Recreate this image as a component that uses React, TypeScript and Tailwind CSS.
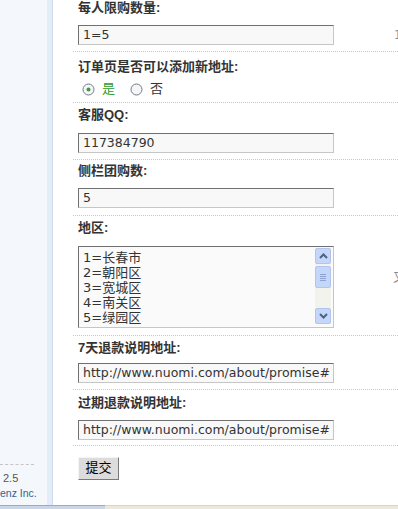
import React from 'react';

const labelFont = { fontFamily: '"Liberation Sans", "Noto Sans CJK SC", sans-serif' };
const textFont = { fontFamily: '"DejaVu Sans", "Noto Sans CJK SC", sans-serif' };
const smallFont = { fontFamily: '"Liberation Sans", Arial, sans-serif' };

function Label({ children }: { children: React.ReactNode }) {
  return (
    <div className="h-[16px] text-[13px] leading-[16px] font-bold text-[#333]" style={labelFont}>
      {children}
    </div>
  );
}

function TextBox({ value }: { value: string }) {
  return (
    <div
      className="h-[20px] w-[256px] shrink-0 overflow-hidden whitespace-nowrap border border-t-[#707070] border-l-[#707070] border-r-[#c6c6c6] border-b-[#c6c6c6] bg-[#f8f8f8] pl-[4px] text-[12.5px] leading-[18px] text-[#333]"
      style={textFont}
    >
      {value}
    </div>
  );
}

function Radio({ checked }: { checked?: boolean }) {
  return (
    <svg width="13" height="13" viewBox="0 0 13 13">
      <circle cx="6.5" cy="6.5" r="5.5" fill="#f6f6f6" stroke="#6f7c8a" strokeWidth="1" />
      {checked && <circle cx="6.5" cy="6.5" r="2" fill="#3c9c3c" />}
    </svg>
  );
}

function ScrollArrow({ up }: { up?: boolean }) {
  return (
    <div className="flex h-[16px] w-[16px] items-center justify-center rounded-[2px] border border-[#b3c5ee] bg-[#c5d6fb]">
      <svg width="9" height="6" viewBox="0 0 9 6">
        <path d={up ? 'M1 5 L4.5 1.5 L8 5' : 'M1 1 L4.5 4.5 L8 1'} fill="none" stroke="#4d6185" strokeWidth="2" />
      </svg>
    </div>
  );
}

const regions = ['1=长春市', '2=朝阳区', '3=宽城区', '4=南关区', '5=绿园区'];

export default function App() {
  return (
    <div className="flex h-[509px] w-[398px] flex-col overflow-hidden bg-white">
      <div className="flex min-h-0 flex-1">
        {/* sidebar */}
        <div className="flex w-[53px] shrink-0">
          <div className="flex flex-1 flex-col justify-end bg-[#f4f8fc] pb-[4px]">
            <div className="mb-[5px] w-[34px] border-t border-dashed border-[#c4c4c4]" />
            <div className="pl-[3px] text-[11px] leading-[16px] text-[#555]" style={smallFont}>
              2.5
            </div>
            <div className="whitespace-nowrap text-[10.5px] leading-[15px] text-[#3a5f8e]" style={smallFont}>
              enz Inc.
            </div>
          </div>
          <div className="w-[6px] border-r border-[#cddcec] bg-[#e2edf8]" />
        </div>

        {/* form */}
        <div className="min-w-0 flex-1 pl-[20px]">
          <div className="border-b border-dotted border-[#c8c8c8] pb-[6px] pl-[5px]">
            <Label>每人限购数量:</Label>
            <div className="mt-[9px] flex items-center whitespace-nowrap">
              <TextBox value="1=5" />
              <span className="ml-[60px] text-[12px] text-[#8a8a8a]" style={textFont}>1</span>
            </div>
          </div>

          <div className="border-b border-dotted border-[#c8c8c8] pt-[7px] pb-[5px] pl-[5px]">
            <Label>订单页是否可以添加新地址:</Label>
            <div className="mt-[6px] flex h-[16px] items-center pl-[4px] text-[13px]" style={textFont}>
              <Radio checked />
              <span className="ml-[7px] text-[#2e9b2e]">是</span>
              <span className="ml-[15px] flex"><Radio /></span>
              <span className="ml-[7px] text-[#333]">否</span>
            </div>
          </div>

          <div className="border-b border-dotted border-[#c8c8c8] pt-[4px] pb-[6px] pl-[5px]">
            <Label>客服QQ:</Label>
            <div className="mt-[10px]">
              <TextBox value="117384790" />
            </div>
          </div>

          <div className="border-b border-dotted border-[#c8c8c8] pt-[3px] pb-[7px] pl-[5px]">
            <Label>侧栏团购数:</Label>
            <div className="mt-[9px]">
              <TextBox value="5" />
            </div>
          </div>

          <div className="border-b border-dotted border-[#c8c8c8] pt-[4px] pb-[7px] pl-[5px]">
            <Label>地区:</Label>
            <div className="mt-[10px] flex whitespace-nowrap">
              <div className="flex h-[82px] w-[256px] shrink-0 border border-t-[#707070] border-l-[#707070] border-r-[#c6c6c6] border-b-[#c6c6c6] bg-[#fafafa]">
                <div className="min-w-0 flex-1 overflow-hidden pt-[3px] pl-[4px] text-[13px] leading-[15px] text-[#333]" style={textFont}>
                  {regions.map((r) => (
                    <div key={r}>{r}</div>
                  ))}
                </div>
                <div className="mr-[2px] mt-[1px] mb-[3px] flex w-[16px] flex-col bg-[#f3f3ee]">
                  <ScrollArrow up />
                  <div className="mt-[2px] flex h-[22px] w-[16px] flex-col items-center justify-center gap-[1px] rounded-[2px] border border-[#b3c5ee] bg-[#c5d6fb]">
                    <div className="h-px w-[6px] bg-[#8ea3d0]" />
                    <div className="h-px w-[6px] bg-[#8ea3d0]" />
                    <div className="h-px w-[6px] bg-[#8ea3d0]" />
                    <div className="h-px w-[6px] bg-[#8ea3d0]" />
                  </div>
                  <div className="flex-1" />
                  <ScrollArrow />
                </div>
              </div>
              <span className="ml-[59px] mt-[26px] self-start text-[12px] leading-[12px] text-[#8a8a8a]" style={textFont}>又</span>
            </div>
          </div>

          <div className="border-b border-dotted border-[#c8c8c8] pt-[4px] pb-[6px] pl-[5px]">
            <Label>7天退款说明地址:</Label>
            <div className="mt-[7px]">
              <TextBox value="http://www.nuomi.com/about/promise#" />
            </div>
          </div>

          <div className="border-b border-dotted border-[#c8c8c8] pt-[5px] pb-[5px] pl-[5px]">
            <Label>过期退款说明地址:</Label>
            <div className="mt-[9px]">
              <TextBox value="http://www.nuomi.com/about/promise#" />
            </div>
          </div>

          <div className="pt-[8px] pl-[5px]">
            <button
              className="h-[23px] w-[41px] border border-t-[#f4f4f4] border-l-[#f4f4f4] border-r-[#7a7a7a] border-b-[#7a7a7a] bg-[#dcdcdc] text-[13px] leading-[20px] text-black"
              style={textFont}
            >
              提交
            </button>
          </div>
        </div>
      </div>

      {/* bottom scroll strip */}
      <div className="flex h-[4px] shrink-0">
        <div className="w-[105px] border-t border-[#98adc8] bg-[#c8d6e8]" />
        <div className="flex-1 border-t border-[#d9d5c2] bg-[#ece9d8]" />
      </div>
    </div>
  );
}
